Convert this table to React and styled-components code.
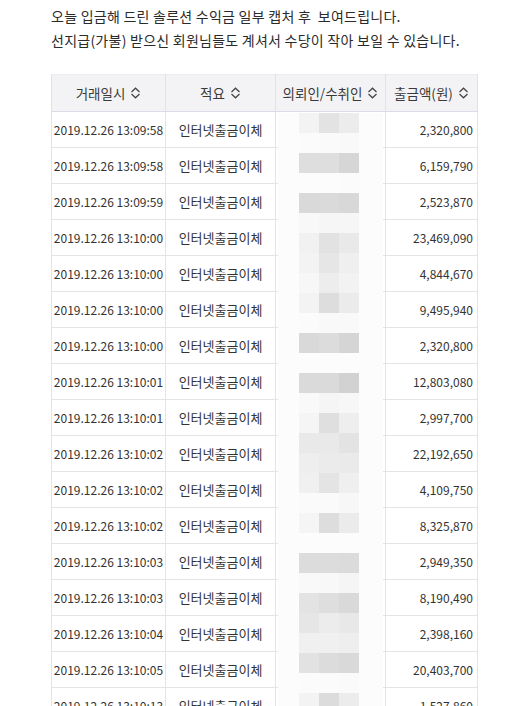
import React from "react";
import styled, { createGlobalStyle } from "styled-components";

const Global = createGlobalStyle`
  html, body { margin: 0; padding: 0; background: #ffffff; }
  body { font-family: "Noto Sans CJK KR", "Noto Sans", sans-serif; color: #333; }
`;

const Page = styled.div`
  padding: 4px 0 0 51px;
  width: 473px;
  height: 702px;
  overflow: hidden;
`;

const Intro = styled.p`
  margin: 0;
  font-size: 14px;
  letter-spacing: 0.25px;
  line-height: 24px;
  color: #2b2b2b;
  white-space: pre;
`;

const TableWrap = styled.div`
  position: relative;
  margin-top: 22px;
  width: 426px;
`;

const Table = styled.table`
  border-collapse: collapse;
  table-layout: fixed;
  width: 426px;
  color: #333;
`;

const HeadCell = styled.th`
  width: ${(p) => p.$w}px;
  height: 36px;
  padding: 0;
  background: #f3f3f5;
  border-top: 1px solid #ececef;
  border-left: 1px solid #e2e2e6;
  border-right: 1px solid #e2e2e6;
  border-bottom: 1px solid #dcdce8;
  font-weight: 400;
  font-size: 13.5px;
  color: #3a3a3a;
  text-align: center;
  white-space: nowrap;
  overflow: hidden;
`;

const HeadInner = styled.span`
  display: inline-flex;
  align-items: center;
  gap: 5px;
`;

const Cell = styled.td`
  height: 35px;
  padding: 0 ${(p) => (p.$align === "right" ? "4px" : "0")} 0 0;
  border: 1px solid #e4e4e4;
  font-size: ${(p) => p.$size || 12}px;
  text-align: ${(p) => p.$align || "center"};
  white-space: nowrap;
  vertical-align: middle;
  line-height: 1;
  overflow: hidden;
`;

const Mosaic = styled.div`
  position: absolute;
  left: 227px;
  top: 39px;
  width: 105px;
  display: grid;
  grid-template-columns: 21px 20px 20px 20px 20px 4px;
  grid-auto-rows: 20px;
  background: #fcfcfd;
`;

const Tile = styled.div`
  background: ${(p) => p.$c};
`;

const SortIcon = () => (
  <svg width="11" height="12" viewBox="0 0 11 12" fill="none">
    <path d="M1.5 5 L5.5 1.2 L9.5 5" stroke="#444" strokeWidth="1.2" />
    <path d="M1.5 7 L5.5 10.8 L9.5 7" stroke="#444" strokeWidth="1.2" />
  </svg>
);

const rows = [
  ["13:09:58", "2,320,800"],
  ["13:09:58", "6,159,790"],
  ["13:09:59", "2,523,870"],
  ["13:10:00", "23,469,090"],
  ["13:10:00", "4,844,670"],
  ["13:10:00", "9,495,940"],
  ["13:10:00", "2,320,800"],
  ["13:10:01", "12,803,080"],
  ["13:10:01", "2,997,700"],
  ["13:10:02", "22,192,650"],
  ["13:10:02", "4,109,750"],
  ["13:10:02", "8,325,870"],
  ["13:10:03", "2,949,350"],
  ["13:10:03", "8,190,490"],
  ["13:10:04", "2,398,160"],
  ["13:10:05", "20,403,700"],
  ["13:10:13", "1,527,860"],
];

const mosaic = [
  ["#f3f3f3", "#e3e3e3", "#ececec"],
  ["#fbfbfc", "#fafafb", "#f9f9fa"],
  ["#dedede", "#dedede", "#d6d6d6"],
  ["#fcfcfd", "#fcfcfd", "#fbfbfc"],
  ["#d9d9d9", "#dadada", "#d8d8d8"],
  ["#f8f8f9", "#f6f6f7", "#f6f6f7"],
  ["#f1f1f2", "#e2e2e3", "#e9e9ea"],
  ["#f3f3f4", "#e6e6e7", "#efeff0"],
  ["#f7f7f8", "#ededee", "#f2f2f3"],
  ["#f3f3f3", "#dddddd", "#ebebeb"],
  ["#fbfbfc", "#f9f9fa", "#f9f9fa"],
  ["#d9d9d9", "#dcdcdc", "#d5d5d5"],
  ["#fcfcfd", "#fcfcfd", "#fcfcfd"],
  ["#dadada", "#dadada", "#d2d2d2"],
  ["#f9f9fa", "#f5f5f6", "#f7f7f8"],
  ["#f5f5f5", "#dfdfdf", "#eeeeee"],
  ["#e9e9ea", "#e9e9ea", "#e3e3e4"],
  ["#eeeeef", "#ebebec", "#eaeaeb"],
  ["#f0f0f1", "#e4e4e5", "#efeff0"],
  ["#fafafb", "#fafafb", "#f7f7f8"],
  ["#f5f5f5", "#dddddd", "#ebebeb"],
  ["#fcfcfd", "#fcfcfd", "#fcfcfd"],
  ["#dcdcdc", "#dcdcdc", "#dbdbdb"],
  ["#f9f9f9", "#f8f8f8", "#f5f5f5"],
  ["#e3e3e3", "#dedede", "#d9d9d9"],
  ["#e6e6e6", "#ececec", "#e8e8e8"],
  ["#f0f0f0", "#f0f0f0", "#eeeeee"],
  ["#e2e2e2", "#dcdcdc", "#d9d9d9"],
  ["#fbfbfc", "#fbfbfc", "#fafafb"],
  ["#f3f3f3", "#dcdcdc", "#ececec"],
];

const headers = [
  ["거래일시", 114],
  ["적요", 110],
  ["의뢰인/수취인", 110],
  ["출금액(원)", 92],
];

export default function App() {
  return (
    <>
      <Global />
      <Page>
        <Intro>{"오늘 입금해 드린 솔루션 수익금 일부 캡처 후  보여드립니다."}</Intro>
        <Intro>{"선지급(가불) 받으신 회원님들도 계셔서 수당이 작아 보일 수 있습니다."}</Intro>
        <TableWrap>
          <Table>
            <colgroup>
              <col style={{ width: 114 }} />
              <col style={{ width: 110 }} />
              <col style={{ width: 110 }} />
              <col style={{ width: 92 }} />
            </colgroup>
            <thead>
              <tr>
                {headers.map(([t, w]) => (
                  <HeadCell key={t} $w={w}>
                    <HeadInner>
                      {t}
                      <SortIcon />
                    </HeadInner>
                  </HeadCell>
                ))}
              </tr>
            </thead>
            <tbody>
              {rows.map(([time, amt], i) => (
                <tr key={i}>
                  <Cell>2019.12.26 {time}</Cell>
                  <Cell $size={13}>인터넷출금이체</Cell>
                  <Cell></Cell>
                  <Cell $align="right">{amt}</Cell>
                </tr>
              ))}
            </tbody>
          </Table>
          <Mosaic>
            {mosaic.map((r, i) => (
              <React.Fragment key={i}>
                <Tile $c="#fcfcfd" />
                <Tile $c={r[0]} />
                <Tile $c={r[1]} />
                <Tile $c={r[2]} />
                <Tile $c="#fcfcfd" />
                <Tile $c="#fcfcfd" />
              </React.Fragment>
            ))}
          </Mosaic>
        </TableWrap>
      </Page>
    </>
  );
}
